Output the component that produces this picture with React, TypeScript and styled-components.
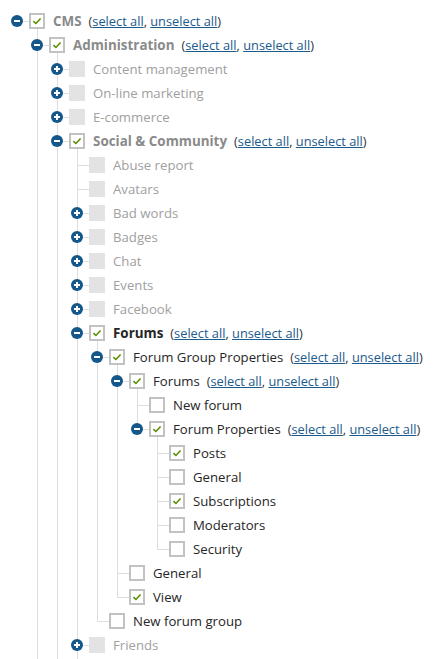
import React from "react";
import styled, { createGlobalStyle, css } from "styled-components";

type Tone = "section" | "bold" | "normal";

type TreeItem = {
  label: string;
  checked?: boolean;
  disabled?: boolean;
  toggle?: "open" | "closed";
  tone?: Tone;
  links?: boolean;
  // more siblings follow below the visible part of the page
  continues?: boolean;
  children?: TreeItem[];
};

const closed = (label: string): TreeItem => ({ label, disabled: true, toggle: "closed" });
const leafOff = (label: string): TreeItem => ({ label, disabled: true });

const tree: TreeItem = {
  label: "CMS",
  checked: true,
  toggle: "open",
  tone: "section",
  links: true,
  children: [
    {
      label: "Administration",
      checked: true,
      toggle: "open",
      tone: "section",
      links: true,
      continues: true,
      children: [
        closed("Content management"),
        closed("On-line marketing"),
        closed("E-commerce"),
        {
          label: "Social & Community",
          checked: true,
          toggle: "open",
          tone: "section",
          links: true,
          continues: true,
          children: [
            leafOff("Abuse report"),
            leafOff("Avatars"),
            closed("Bad words"),
            closed("Badges"),
            closed("Chat"),
            closed("Events"),
            closed("Facebook"),
            {
              label: "Forums",
              checked: true,
              toggle: "open",
              tone: "bold",
              links: true,
              children: [
                {
                  label: "Forum Group Properties",
                  checked: true,
                  toggle: "open",
                  links: true,
                  children: [
                    {
                      label: "Forums",
                      checked: true,
                      toggle: "open",
                      links: true,
                      children: [
                        { label: "New forum" },
                        {
                          label: "Forum Properties",
                          checked: true,
                          toggle: "open",
                          links: true,
                          children: [
                            { label: "Posts", checked: true },
                            { label: "General" },
                            { label: "Subscriptions", checked: true },
                            { label: "Moderators" },
                            { label: "Security" },
                          ],
                        },
                      ],
                    },
                    { label: "General" },
                    { label: "View", checked: true },
                  ],
                },
                { label: "New forum group" },
              ],
            },
            { ...closed("Friends"), continues: true },
          ],
        },
      ],
    },
  ],
};

const GlobalStyle = createGlobalStyle`
  html, body {
    margin: 0;
    overflow: hidden;
    background: #fff;
  }
  body {
    font-family: "Open Sans", "Noto Sans", sans-serif;
    font-size: 13px;
    color: #262626;
  }
`;

const Page = styled.div`
  height: 659px;
  overflow: hidden;
  padding: 9px 0 0 7px;
  box-sizing: border-box;
`;

const Branch = styled.ul`
  list-style: none;
  margin: 0;
  padding: 0 0 0 20px;
`;

const RootList = styled(Branch)`
  padding-left: 0;
`;

const lineHeight = (p: { $last?: boolean; $continues?: boolean }) => {
  if (p.$continues) return "calc(100% + 40px)";
  return p.$last ? "16px" : "calc(100% + 4px)";
};

const Item = styled.li<{ $root?: boolean; $last?: boolean; $continues?: boolean }>`
  position: relative;

  &::before {
    content: "";
    position: absolute;
    left: 10px;
    top: -4px;
    width: 1px;
    height: ${lineHeight};
    background: #dedede;
    display: ${(p) => (p.$root ? "none" : "block")};
  }

  &::after {
    content: "";
    position: absolute;
    left: 10px;
    top: 12px;
    width: 12px;
    height: 1px;
    background: #dedede;
  }
`;

const Row = styled.div`
  position: relative;
  z-index: 1;
  display: flex;
  align-items: center;
  height: 24px;
  white-space: nowrap;
`;

const ToggleSlot = styled.div`
  width: 20px;
  flex: none;
  display: flex;
  justify-content: center;
  align-items: center;
`;

const Box = styled.span<{ $disabled?: boolean }>`
  flex: none;
  margin-left: 2px;
  width: 16px;
  height: 16px;
  box-sizing: border-box;
  display: flex;
  align-items: center;
  justify-content: center;
  border: 2px solid #c2c2c2;
  background: #fff;
  ${(p) =>
    p.$disabled &&
    css`
      border-color: #e3e3e3;
      background: #e3e3e3;
    `}
`;

const Label = styled.span<{ $tone: Tone; $disabled?: boolean }>`
  margin-left: 8px;
  font-size: 13.2px;
  color: #262626;
  ${(p) =>
    p.$tone === "section" &&
    css`
      font-weight: 700;
      font-size: 13.4px;
      color: #8a8a8a;
    `}
  ${(p) =>
    p.$tone === "bold" &&
    css`
      font-weight: 700;
      font-size: 13.4px;
      color: #262626;
    `}
  ${(p) =>
    p.$disabled &&
    css`
      color: #a0a0a0;
    `}
`;

const Links = styled.span`
  margin-left: 7px;
  font-size: 12.8px;
  color: #333;
`;

const Link = styled.a`
  color: #1b5a8c;
  text-decoration: underline;
  cursor: pointer;
`;

function Toggle({ open }: { open: boolean }) {
  return (
    <svg width="12" height="12" viewBox="0 0 12 12">
      <circle cx="6" cy="6" r="6" fill="#14578b" />
      <path d="M3 6h6" stroke="#fff" strokeWidth="2" />
      {!open && <path d="M6 3v6" stroke="#fff" strokeWidth="2" />}
    </svg>
  );
}

function CheckMark() {
  return (
    <svg width="10" height="10" viewBox="0 0 10 10">
      <path
        d="M1.4 5.2 L3.9 7.5 L8.6 2.5"
        fill="none"
        stroke="#5a8e00"
        strokeWidth="1.6"
      />
    </svg>
  );
}

function Node({ item, root, last }: { item: TreeItem; root?: boolean; last?: boolean }) {
  const kids = item.toggle === "open" ? item.children ?? [] : [];
  return (
    <Item $root={root} $last={last} $continues={item.continues}>
      <Row>
        <ToggleSlot>{item.toggle && <Toggle open={item.toggle === "open"} />}</ToggleSlot>
        <Box $disabled={item.disabled}>{item.checked && <CheckMark />}</Box>
        <Label $tone={item.tone ?? "normal"} $disabled={item.disabled}>
          {item.label}
        </Label>
        {item.links && (
          <Links>
            (<Link>select all</Link>, <Link>unselect all</Link>)
          </Links>
        )}
      </Row>
      {kids.length > 0 && (
        <Branch>
          {kids.map((k, i) => (
            <Node key={k.label + i} item={k} last={i === kids.length - 1} />
          ))}
        </Branch>
      )}
    </Item>
  );
}

export default function App() {
  return (
    <Page>
      <GlobalStyle />
      <RootList>
        <Node item={tree} root last />
      </RootList>
    </Page>
  );
}
